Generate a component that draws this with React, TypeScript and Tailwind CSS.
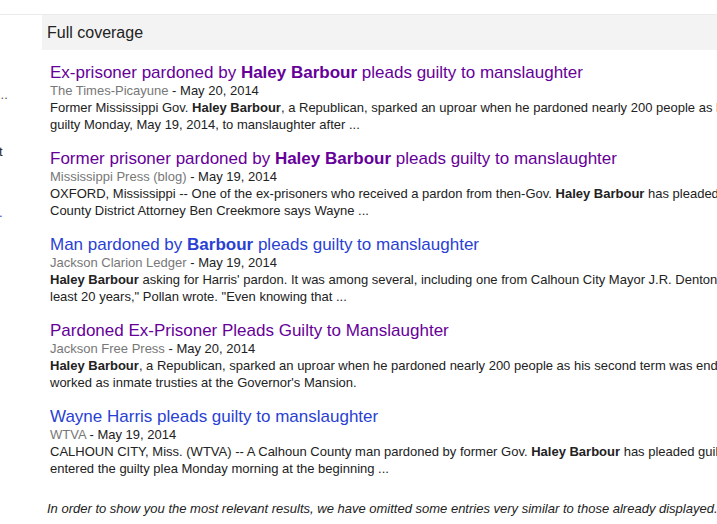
import React from "react";

const PURPLE = "text-[#660099]";
const BLUE = "text-[#2a3fd3]";

type Item = {
  visited: boolean;
  title: React.ReactNode;
  source: string;
  date: string;
  l1: React.ReactNode;
  l2: React.ReactNode;
};

const B = ({ children }: { children: React.ReactNode }) => <b className="font-bold">{children}</b>;

const items: Item[] = [
  {
    visited: true,
    title: (
      <>
        Ex-prisoner pardoned by <B>Haley Barbour</B> pleads guilty to manslaughter
      </>
    ),
    source: "The Times-Picayune",
    date: "May 20, 2014",
    l1: (
      <>
        Former Mississippi Gov. <B>Haley Barbour</B>, a Republican, sparked an uproar when he pardoned nearly 200 people as his second term
      </>
    ),
    l2: <>guilty Monday, May 19, 2014, to manslaughter after ...</>,
  },
  {
    visited: true,
    title: (
      <>
        Former prisoner pardoned by <B>Haley Barbour</B> pleads guilty to manslaughter
      </>
    ),
    source: "Mississippi Press (blog)",
    date: "May 19, 2014",
    l1: (
      <>
        OXFORD, Mississippi -- One of the ex-prisoners who received a pardon from then-Gov. <B>Haley Barbour</B> has pleaded guilty
      </>
    ),
    l2: <>County District Attorney Ben Creekmore says Wayne ...</>,
  },
  {
    visited: false,
    title: (
      <>
        Man pardoned by <B>Barbour</B> pleads guilty to manslaughter
      </>
    ),
    source: "Jackson Clarion Ledger",
    date: "May 19, 2014",
    l1: (
      <>
        <B>Haley Barbour</B> asking for Harris' pardon. It was among several, including one from Calhoun City Mayor J.R. Denton, who
      </>
    ),
    l2: <>least 20 years," Pollan wrote. "Even knowing that ...</>,
  },
  {
    visited: true,
    title: <>Pardoned Ex-Prisoner Pleads Guilty to Manslaughter</>,
    source: "Jackson Free Press",
    date: "May 20, 2014",
    l1: (
      <>
        <B>Haley Barbour</B>, a Republican, sparked an uproar when he pardoned nearly 200 people as his second term was ending in 2012
      </>
    ),
    l2: <>worked as inmate trusties at the Governor's Mansion.</>,
  },
  {
    visited: false,
    title: <>Wayne Harris pleads guilty to manslaughter</>,
    source: "WTVA",
    date: "May 19, 2014",
    l1: (
      <>
        CALHOUN CITY, Miss. (WTVA) -- A Calhoun County man pardoned by former Gov. <B>Haley Barbour</B> has pleaded guilty to
      </>
    ),
    l2: <>entered the guilty plea Monday morning at the beginning ...</>,
  },
];

export default function App() {
  return (
    <div
      className="w-[717px] h-[524px] overflow-hidden bg-white text-[#222]"
      style={{ fontFamily: '"Liberation Sans", Arial, sans-serif' }}
    >
      <div className="h-[15px] border-b border-[#ebebeb]" />
      <div className="flex">
        <div className="w-[42px] shrink-0 flex flex-col text-[13px] leading-[17px] text-[#222] overflow-hidden">
          <div className="h-[71px]" />
          <div className="-ml-[3px] text-[#555]">...</div>
          <div className="h-[40px]" />
          <div className="-ml-[1px]">t</div>
          <div className="h-[44px]" />
          <div className="-ml-[1px] text-[#2a3fd3]">.</div>
        </div>
        <div className="flex-1 min-w-0 overflow-hidden">
          <div className="h-[35px] bg-[#f3f3f3] flex items-center pl-[5px] text-[16px] text-[#222]">
            Full coverage
          </div>
          <div className="pl-[8px] pt-[13px]">
            {items.map((it, i) => (
              <div key={i} className="pb-[16px] whitespace-nowrap">
                <div className={`text-[17px] leading-[19px] ${it.visited ? PURPLE : BLUE}`}>{it.title}</div>
                <div className="text-[13px] leading-[17px]">
                  <span className="text-[#777]">{it.source}</span>
                  <span className="text-[#222]"> - {it.date}</span>
                </div>
                <div className="text-[13px] leading-[17px] text-[#222]">{it.l1}</div>
                <div className="text-[13px] leading-[17px] text-[#222]">{it.l2}</div>
              </div>
            ))}
          </div>
          <div className="pl-[5px] pt-[7px] text-[13px] leading-[17px] italic text-[#222] whitespace-nowrap">
            In order to show you the most relevant results, we have omitted some entries very similar to those already displayed.
          </div>
        </div>
      </div>
    </div>
  );
}
